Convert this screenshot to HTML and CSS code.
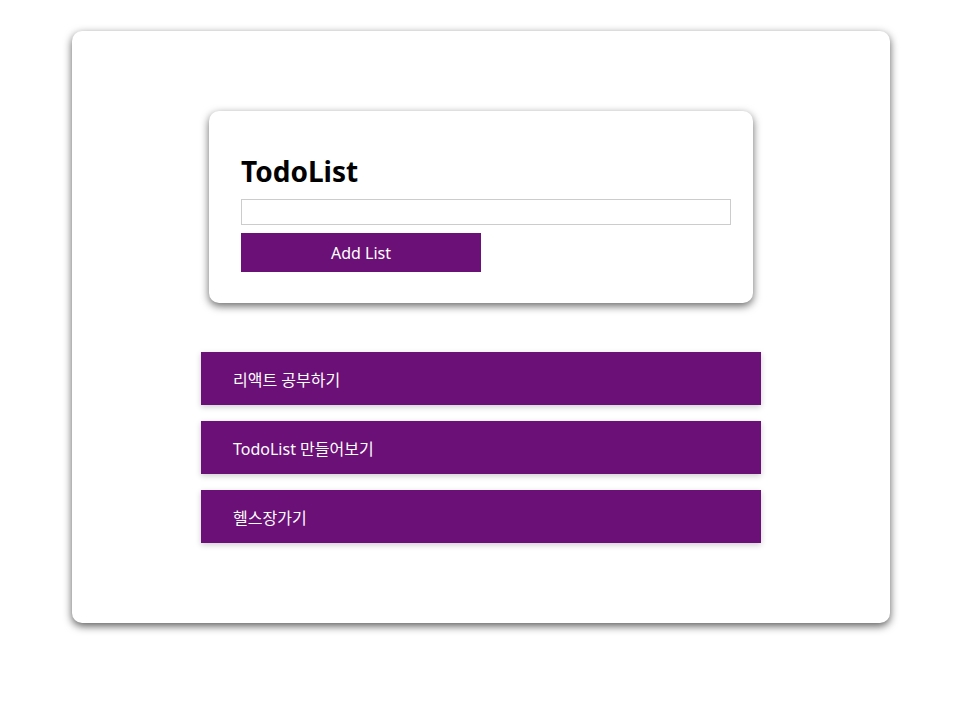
FILE: index.html
```html
<!DOCTYPE html>
<html lang="ko">
<head>
<meta charset="utf-8">
<title>TodoList</title>
<link rel="stylesheet" href="styles.css">
</head>
<body>
<div class="page">
  <div class="board">
    <div class="form-card">
      <h1 class="title">TodoList</h1>
      <input class="todo-input" type="text">
      <button class="add-btn">Add List</button>
    </div>
    <ul class="todo-list">
      <li class="todo-item">리액트 공부하기</li>
      <li class="todo-item">TodoList 만들어보기</li>
      <li class="todo-item">헬스장가기</li>
    </ul>
  </div>
</div>
</body>
</html>
```
FILE: styles.css
```css
* { box-sizing: border-box; }
html, body { background: #fff; }
body {
  margin: 0;
  font-family: "Noto Sans", "Noto Sans CJK KR", sans-serif;
}
.page {
  width: 962px;
  padding: 31px 0 60px;
}
.board {
  width: 818px;
  margin: 0 auto;
  background: #fff;
  border-radius: 10px;
  box-shadow: 0 3px 9px rgba(0,0,0,0.65);
  padding: 80px 0;
  display: flex;
  flex-direction: column;
  align-items: center;
}
.form-card {
  width: 544px;
  background: #fff;
  border-radius: 10px;
  box-shadow: 0 3px 8px rgba(0,0,0,0.6);
  padding: 42px 32px 31px;
}
.title {
  margin: 0 0 10px;
  font-size: 28px;
  line-height: 36px;
  font-weight: 700;
  color: #000;
}
.todo-input {
  display: block;
  width: 490px;
  height: 26px;
  border: 1px solid #ccc;
  margin: 0;
  padding: 0 4px;
}
.add-btn {
  display: block;
  margin-top: 8px;
  width: 240px;
  height: 39px;
  border: none;
  background: #6b1076;
  color: #fff;
  font-family: inherit;
  font-size: 16px;
}
.todo-list {
  list-style: none;
  margin: 49px 0 0;
  padding: 0;
  width: 560px;
  display: flex;
  flex-direction: column;
  gap: 16px;
}
.todo-item {
  height: 53px;
  display: flex;
  align-items: center;
  padding-left: 32px;
  background: #6b1076;
  color: #fff;
  font-size: 16px;
  box-shadow: 0 2px 6px rgba(0,0,0,0.2);
}
```
